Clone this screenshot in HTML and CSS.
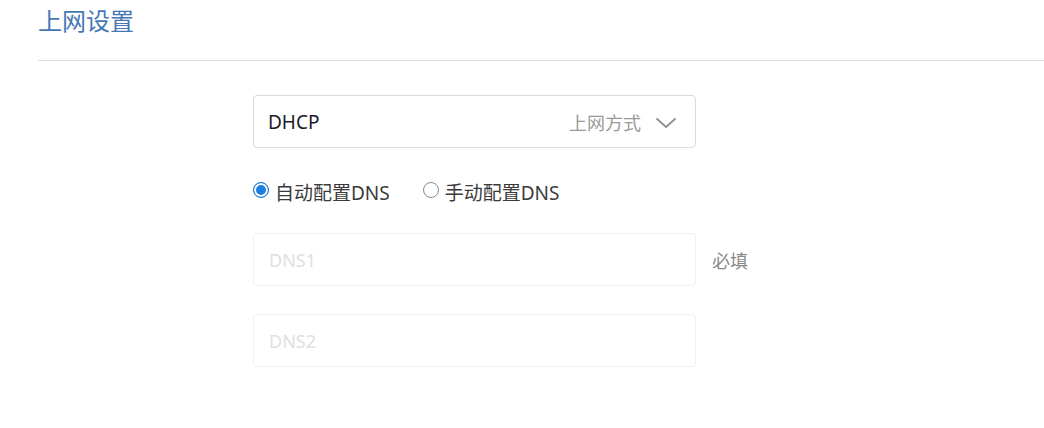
FILE: index.html
```html
<!DOCTYPE html>
<html lang="zh-CN">
<head>
    <meta charset="UTF-8">
    <meta name="viewport" content="width=device-width, initial-scale=1.0">
    <title>上网设置</title>
    <link rel="stylesheet" href="styles.css">
</head>
<body>

    <!-- 标题 -->
    <div class="header">
        <h1>上网设置</h1>
    </div>

    <!-- 表单 -->
    <div class="form">
        <div class="select">
            <span class="select-value">DHCP</span>
            <span class="select-label">上网方式</span>
            <svg class="chevron" width="22" height="12" viewBox="0 0 22 12">
                <polyline points="1.5,1.5 11,10 20.5,1.5" fill="none" stroke="#8f8f8f" stroke-width="1.8"/>
            </svg>
        </div>

        <div class="radios">
            <label class="radio">
                <input type="radio" name="dns" checked>
                <span class="dot"></span>
                自动配置DNS
            </label>
            <label class="radio">
                <input type="radio" name="dns">
                <span class="dot"></span>
                手动配置DNS
            </label>
        </div>

        <div class="row">
            <input type="text" class="field" placeholder="DNS1" readonly>
            <span class="hint">必填</span>
        </div>

        <div class="row">
            <input type="text" class="field" placeholder="DNS2" readonly>
        </div>
    </div>

</body>
</html>
```

FILE: styles.css
```css
* {
    margin: 0;
    padding: 0;
    box-sizing: border-box;
}

body {
    font-family: "Noto Sans", "Noto Sans CJK SC", sans-serif;
    background-color: #fff;
    color: #222;
}

/* 标题 */
.header {
    margin-left: 38px;
    height: 61px;
    border-bottom: 1px solid #dcdcdc;
    padding-top: 4px;
}

.header h1 {
    font-family: "Noto Sans CJK SC", sans-serif;
    font-size: 24px;
    font-weight: normal;
    line-height: 32px;
    color: #4677b5;
}

/* 表单 */
.form {
    margin-left: 253px;
    padding-top: 34px;
    display: flex;
    flex-direction: column;
}

.select {
    width: 443px;
    height: 53px;
    border: 1px solid #dadada;
    border-radius: 4px;
    display: flex;
    align-items: center;
    padding: 0 18px 0 14px;
}

.select-value {
    font-size: 19px;
    color: #1a1a2a;
    flex: 1;
}

.select-label {
    font-family: "Noto Sans CJK SC", sans-serif;
    font-size: 18px;
    color: #9a9a9a;
    margin-right: 14px;
}

.chevron {
    display: block;
    margin-top: 2px;
}

.radios {
    display: flex;
    gap: 33px;
    margin-top: 28px;
    height: 32px;
    align-items: center;
}

.radio {
    display: flex;
    align-items: center;
    font-size: 19px;
    color: #3a3a3a;
    cursor: pointer;
}

.radio input {
    display: none;
}

.dot {
    width: 16px;
    height: 16px;
    border-radius: 50%;
    border: 1px solid #8a8a8a;
    margin: 0 6px 4px 0;
    background: #fff;
}

.radio input:checked + .dot {
    border: 1px solid #1a73d0;
    background: #1f7fe0;
    box-shadow: inset 0 0 0 2px #fff;
}

.row {
    display: flex;
    align-items: center;
    margin-top: 25px;
}

.row:last-child {
    margin-top: 28px;
}

.field {
    width: 443px;
    height: 53px;
    border: 1px solid #f0f0f0;
    border-radius: 4px;
    background: #fff;
    padding: 0 15px;
    font-family: "Noto Sans", sans-serif;
    font-size: 18px;
    outline: none;
}

.field::placeholder {
    color: #e0e0e0;
}

.hint {
    font-family: "Noto Sans CJK SC", sans-serif;
    font-size: 18px;
    color: #888;
    margin-left: 16px;
}
```
